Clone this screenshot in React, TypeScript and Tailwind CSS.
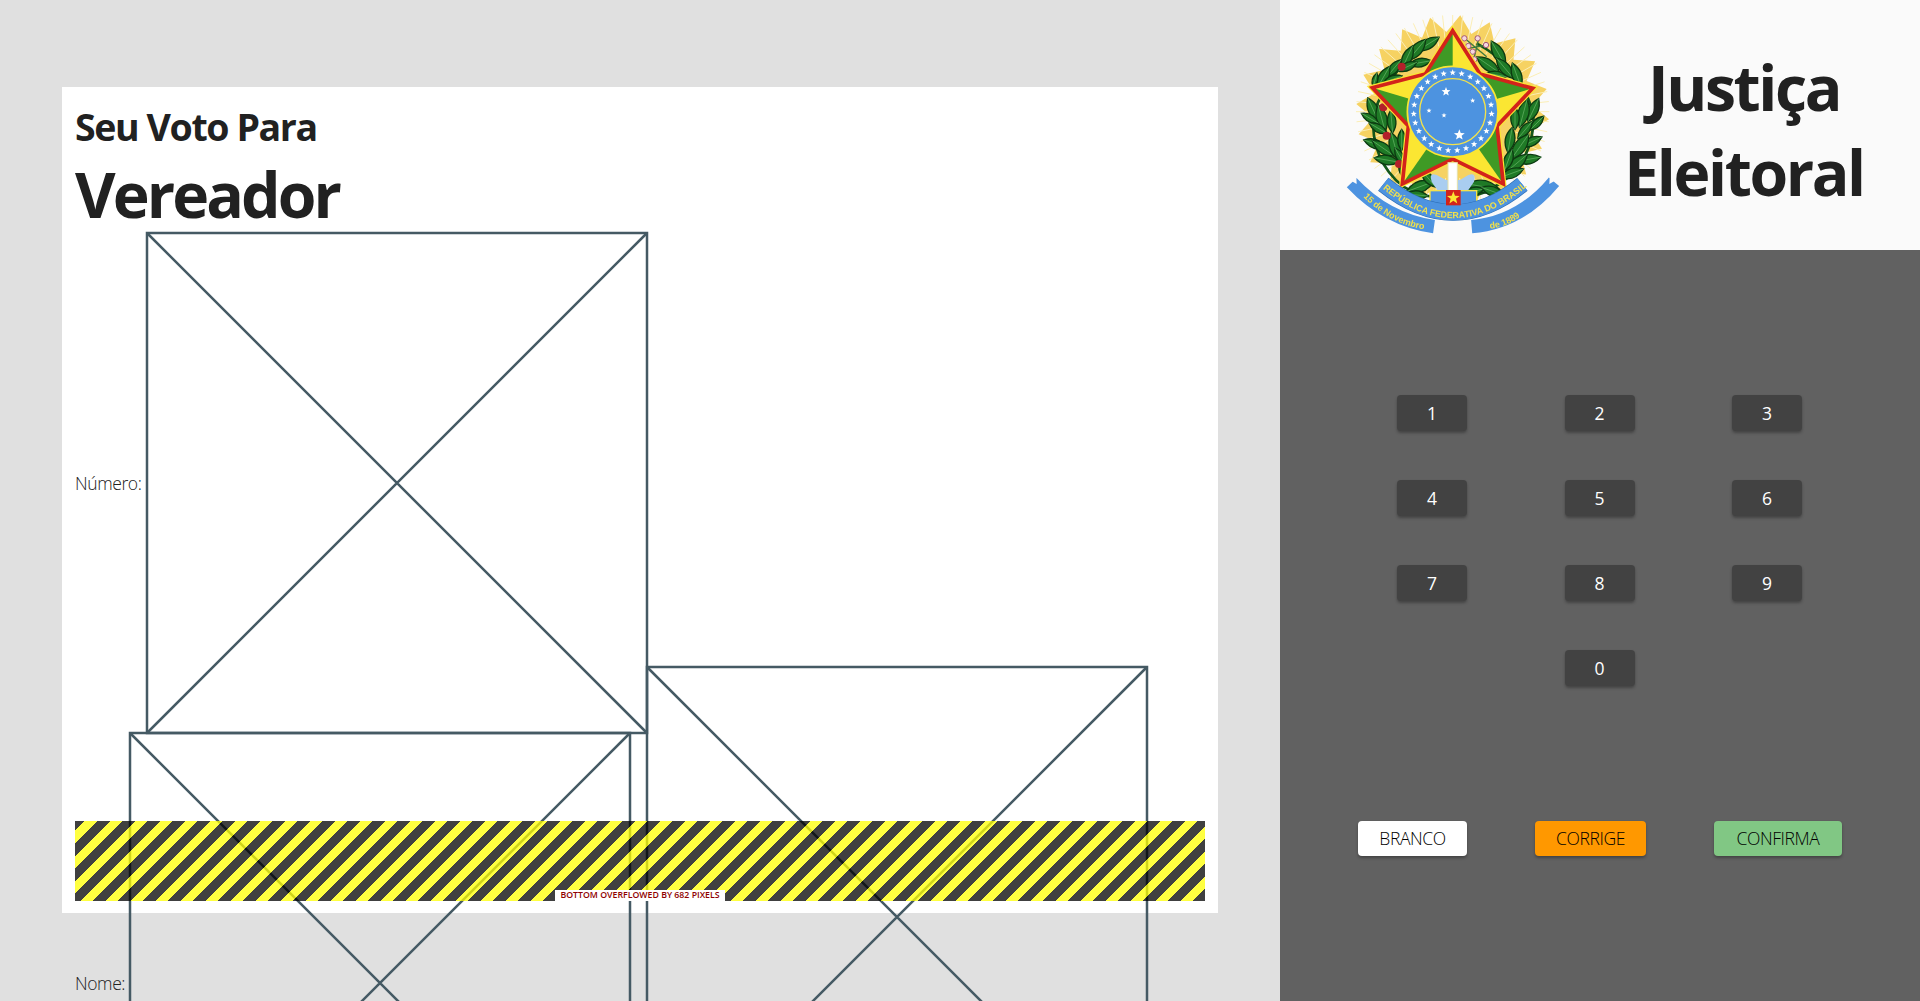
const font = "font-['Open_Sans',sans-serif]"

function starPoints(cx: number, cy: number, r: number, inner = 0.42, rot = 0) {
  const pts: string[] = []
  for (let i = 0; i < 10; i++) {
    const rad = i % 2 === 0 ? r : r * inner
    const a = ((rot + i * 36) * Math.PI) / 180
    pts.push(`${cx + rad * Math.sin(a)},${cy - rad * Math.cos(a)}`)
  }
  return pts.join(' ')
}

function Placeholder() {
  return (
    <svg width="500" height="500" viewBox="0 0 500 500" className="block shrink-0 overflow-visible">
      <rect x="0" y="0" width="500" height="500" fill="none" stroke="#455a64" strokeWidth="2.5" />
      <path d="M0 0 L500 500 M500 0 L0 500" stroke="#455a64" strokeWidth="2.5" />
    </svg>
  )
}

const leaves: [number, number, number, number][] = [
  [325, 132, 58, 38], [290, 150, 40, 42], [262, 172, 25, 38], [300, 188, 80, 34], [262, 200, 65, 32],
  [222, 205, 40, 34], [190, 232, 30, 38], [218, 238, 70, 30], [165, 240, 15, 22],
  [160, 330, 155, 40], [185, 355, 165, 42], [215, 365, 175, 34], [150, 355, 120, 30], [175, 385, 120, 32],
  [165, 432, 110, 36], [190, 445, 125, 40], [225, 440, 165, 44], [245, 420, 180, 32], [200, 480, 100, 38], [240, 470, 150, 30],
  [248, 510, 165, 28], [300, 560, 70, 44], [325, 535, 140, 34], [290, 585, 95, 34],
  [505, 195, 125, 42], [535, 160, 150, 42], [555, 205, 140, 40], [590, 225, 160, 38], [530, 225, 100, 30],
  [640, 330, 25, 38], [610, 340, 15, 44], [585, 355, 0, 34], [650, 370, 45, 30], [615, 390, 40, 34],
  [635, 425, 65, 34], [600, 440, 35, 46], [570, 420, 10, 38], [625, 478, 80, 38], [590, 490, 50, 42], [565, 480, 20, 34],
  [575, 520, 70, 38], [490, 560, 100, 50], [460, 575, 75, 34], [520, 575, 110, 38],
]

function Emblem() {
  const cx = 398
  const cy = 335
  const outer: [number, number][] = [[398, 92], [638, 265], [550, 552], [247, 552], [157, 263]]
  const inner: [number, number][] = [[480, 222], [531, 378], [398, 477], [265, 378], [316, 222]]
  const starOutline = outer.flatMap((p, i) => [p, inner[i]]).map((p) => p.join(',')).join(' ')
  const rays = []
  for (let i = 0; i < 40; i++) {
    const a = ((i * 9 + 4.5) * Math.PI) / 180
    const r = i % 2 === 0 ? 290 : 240
    rays.push(`${cx + r * Math.sin(a)},${cy - r * Math.cos(a)}`)
  }
  return (
    <svg width="260" height="250" viewBox="0 0 780 750" className="block shrink-0 blur-[0.4px]">
      <polygon points={rays.join(' ')} fill="#f6d262" />
      {Array.from({ length: 60 }).map((_, i) => {
        const a = (i * 6 * Math.PI) / 180
        return (
          <line key={i} x1={cx + 200 * Math.sin(a)} y1={cy - 200 * Math.cos(a)} x2={cx + 290 * Math.sin(a)} y2={cy - 290 * Math.cos(a)} stroke="#fbeeb5" strokeWidth="3" />
        )
      })}
      <path d="M330 125 Q215 200 160 340 Q150 480 250 560 Q300 590 345 590" fill="none" stroke="#14571a" strokeWidth="8" />
      <path d="M470 130 Q600 200 640 340 Q645 480 540 550 Q490 585 445 590" fill="none" stroke="#14571a" strokeWidth="8" />
      {leaves.map(([x, y, r, l], i) => (
        <g key={i} transform={`translate(${x} ${y}) rotate(${r})`}>
          <path d={`M0 ${-l} Q${l * 0.75} 0 0 ${l} Q${-l * 0.75} 0 0 ${-l}Z`} fill="#1f7a26" stroke="#0c3a11" strokeWidth="4" />
          <path d={`M0 ${-l} L0 ${l}`} stroke="#66b566" strokeWidth="2" />
        </g>
      ))}
      {[[245, 200], [190, 322], [200, 407], [237, 492]].map(([x, y], i) => (
        <circle key={i} cx={x} cy={y} r="12" fill="#b3202a" />
      ))}
      <path d="M440 120 L500 170 M475 120 L462 175 M500 135 L445 145" stroke="#3d7a3d" strokeWidth="4" />
      {[[433, 115], [473, 115], [498, 135], [445, 138], [458, 155], [463, 178]].map(([x, y], i) => (
        <circle key={i} cx={x} cy={y} r="8" fill="#f4d6df" stroke="#a65a75" strokeWidth="3" />
      ))}
      <polygon points={starOutline} fill="#fbe632" stroke="#fbe632" strokeWidth="18" strokeLinejoin="miter" />
      {outer.map((p, i) => {
        const prev = inner[(i + 4) % 5]
        return (
          <polygon key={i} points={`${p.join(',')} ${prev.join(',')} ${cx},${cy}`} fill="#3f9a25" />
        )
      })}
      <polygon points={starOutline} fill="none" stroke="#d3231b" strokeWidth="11" strokeLinejoin="miter" />
      <circle cx={cx} cy={cy} r="136" fill="#4d93e0" stroke="#fbe632" strokeWidth="5" />
      <circle cx={cx} cy={cy} r="99" fill="#4d93e0" stroke="#f3e24b" strokeWidth="4" />
      {Array.from({ length: 27 }).map((_, i) => (
        <polygon key={i} points={starPoints(cx + 117 * Math.sin((i * 2 * Math.PI) / 27), cy - 117 * Math.cos((i * 2 * Math.PI) / 27), 10)} fill="#ffffff" />
      ))}
      {[[378, 275, 14], [458, 302, 8], [327, 332, 8], [372, 346, 8], [418, 405, 17]].map(([x, y, r], i) => (
        <polygon key={i} points={starPoints(x, y, r)} fill="#ffffff" />
      ))}
      <path d="M350 525 Q325 515 335 545 L352 570 L445 570 L462 545 Q470 515 445 525 L420 540 L378 540Z" fill="#a9cdf0" />
      <rect x="384" y="488" width="28" height="85" fill="#ffffff" stroke="#e6e2a8" strokeWidth="3" />
      <path d="M95 548 Q200 660 342 680" fill="none" stroke="#4d93e0" strokeWidth="40" />
      <path d="M702 545 Q600 668 455 680" fill="none" stroke="#4d93e0" strokeWidth="40" />
      <polygon points="72,530 110,552 108,510" fill="#fafafa" />
      <polygon points="725,530 688,552 690,510" fill="#fafafa" />
      <rect x="330" y="572" width="140" height="46" fill="#4d93e0" stroke="#f3e24b" strokeWidth="4" />
      <path d="M190 553 Q400 722 607 553" fill="none" stroke="#2b6cb3" strokeWidth="50" />
      <path d="M190 553 Q400 722 607 553" fill="none" stroke="#4d93e0" strokeWidth="46" />
      <rect x="378" y="570" width="44" height="46" fill="#d3231b" />
      <polygon points={starPoints(400, 594, 20)} fill="#fbe632" />
      <path id="emblem-band" d="M188 566 Q400 744 616 564" fill="none" />
      <path id="emblem-left" d="M130 590 Q215 680 340 692" fill="none" />
      <path id="emblem-right" d="M510 686 Q570 680 610 640" fill="none" />
      <text fontFamily="'Liberation Sans',sans-serif" fontWeight="700" fontSize="27" fill="#f1e04a">
        <textPath href="#emblem-band" textLength="480" lengthAdjust="spacingAndGlyphs">REPÚBLICA FEDERATIVA DO BRASIL</textPath>
      </text>
      <text fontFamily="'Liberation Sans',sans-serif" fontWeight="700" fontSize="27" fill="#f1e04a">
        <textPath href="#emblem-left">15 de Novembro</textPath>
      </text>
      <text fontFamily="'Liberation Sans',sans-serif" fontWeight="700" fontSize="27" fill="#f1e04a">
        <textPath href="#emblem-right">de 1889</textPath>
      </text>
    </svg>
  )
}

function KeyButton({ label }: { label: string }) {
  return (
    <button className="w-[70px] h-[36px] rounded-[4px] bg-[#424242] text-white text-[17.5px] shadow-[0_2px_3px_rgba(0,0,0,0.3)] flex items-center justify-center">
      {label}
    </button>
  )
}

function ActionButton({ label, className }: { label: string; className: string }) {
  return (
    <button className={`h-[35px] rounded-[4px] text-black text-[17.5px] font-light tracking-[-0.4px] shadow-[0_2px_3px_rgba(0,0,0,0.3)] flex items-center justify-center ${className}`}>
      {label}
    </button>
  )
}

export default function App() {
  return (
    <div className={`flex w-screen h-screen overflow-hidden text-[#212121] ${font}`}>
      <div className="w-[1280px] h-full shrink-0 bg-[#e0e0e0] pt-[87px] pl-[62px]">
        <div className="relative w-[1156px] h-[826px] bg-white p-[12px]">
          <h2 className="pl-[1px] pt-[3px] text-[37.5px] leading-[50px] font-bold tracking-[-1.4px] h-[46px]">Seu Voto Para</h2>
          <h1 className="pl-[1px] pt-[6px] text-[62.5px] leading-[86px] font-bold tracking-[-2.9px] h-[88px]">Vereador</h1>
          <div className="flex items-start">
            <div className="flex flex-col shrink-0 w-[572.5px]">
              <div className="flex items-center">
                <span className="w-[72.5px] pl-[1px] shrink-0 text-[17.5px] font-light tracking-[-0.4px]">Número:</span>
                <Placeholder />
              </div>
              <div className="flex items-center">
                <span className="w-[56.25px] pl-[1px] shrink-0 text-[17.5px] font-light tracking-[-0.4px]">Nome:</span>
                <Placeholder />
              </div>
            </div>
            <div className="mt-[434px] shrink-0">
              <Placeholder />
            </div>
          </div>
          <div className="absolute left-[13px] top-[734px] w-[1130px] h-[80px] bg-[repeating-linear-gradient(135deg,rgba(0,0,0,0.75)_0,rgba(0,0,0,0.75)_7.07px,rgba(255,255,0,0.75)_7.07px,rgba(255,255,0,0.75)_15.91px,rgba(0,0,0,0.75)_15.91px,rgba(0,0,0,0.75)_17.68px)]">
            <span className="absolute left-[480px] bottom-0 w-[170px] h-[11px] bg-white text-[#900000] text-[8.75px] leading-[11px] font-semibold text-center whitespace-nowrap">
              BOTTOM OVERFLOWED BY 682 PIXELS
            </span>
          </div>
        </div>
      </div>
      <div className="flex-1 h-full bg-[#616161] flex flex-col">
        <div className="h-[250px] bg-[#fafafa] flex items-start pl-[40px]">
          <Emblem />
          <div className="w-[320px] pl-[8px] pt-[45px] text-center text-[62.5px] leading-[84.5px] font-bold tracking-[-2.4px]">
            <div>Justiça</div>
            <div>Eleitoral</div>
          </div>
        </div>
        <div className="mt-[145px] flex flex-col gap-[49px] pl-[117px] pr-[118px]">
          <div className="flex justify-between">
            <KeyButton label="1" />
            <KeyButton label="2" />
            <KeyButton label="3" />
          </div>
          <div className="flex justify-between">
            <KeyButton label="4" />
            <KeyButton label="5" />
            <KeyButton label="6" />
          </div>
          <div className="flex justify-between">
            <KeyButton label="7" />
            <KeyButton label="8" />
            <KeyButton label="9" />
          </div>
          <div className="flex justify-center">
            <KeyButton label="0" />
          </div>
        </div>
        <div className="mt-[135px] flex justify-between px-[78px]">
          <ActionButton label="BRANCO" className="w-[109px] bg-white" />
          <ActionButton label="CORRIGE" className="w-[111px] bg-[#ff9800]" />
          <ActionButton label="CONFIRMA" className="w-[128px] bg-[#81c784]" />
        </div>
      </div>
    </div>
  )
}
